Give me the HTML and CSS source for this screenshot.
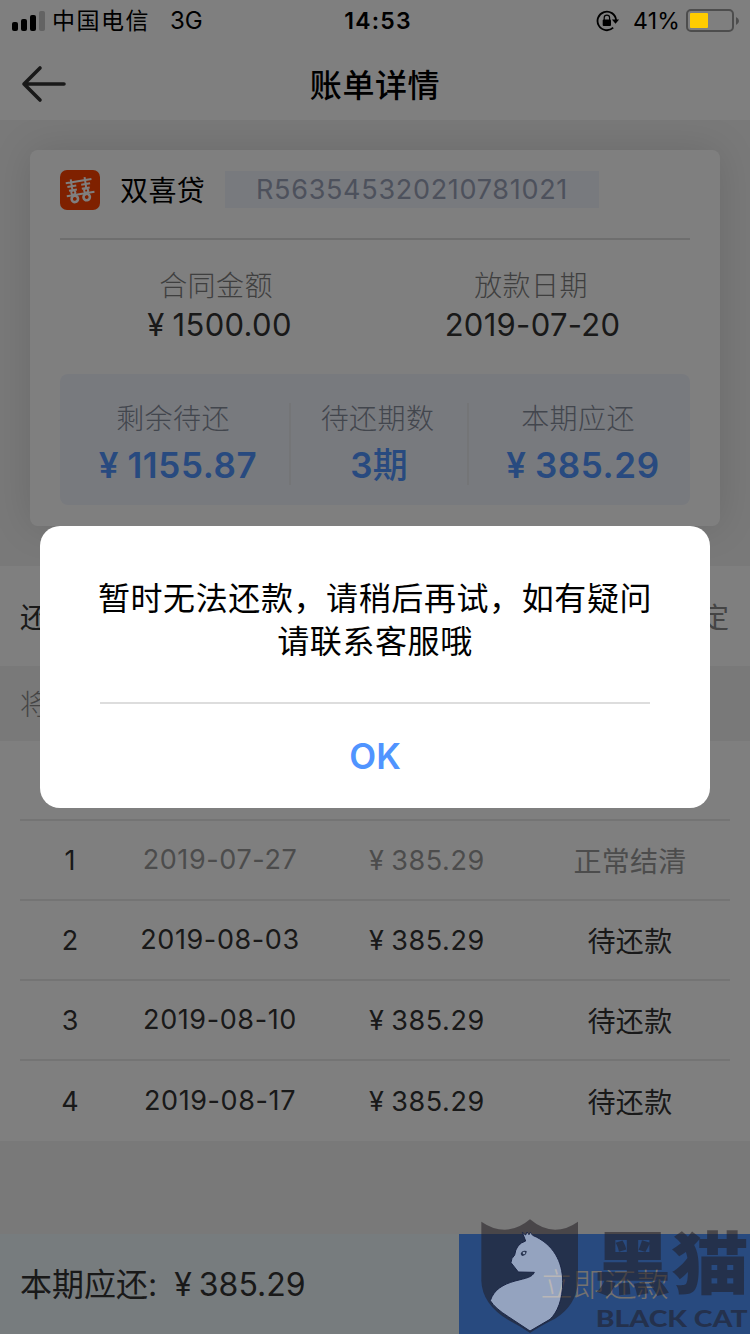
FILE: index.html
```html
<!DOCTYPE html>

<html lang="zh-CN">

<head>
    <meta charset="utf-8">
    <title> 账单详情 </title>
    <link rel="stylesheet" href="styles.css">
</head>

<body>
    <header id="status">
        <div class="carrier">
            <svg width="34" height="20" viewBox="0 0 34 20">
                <rect x="0" y="11" width="6" height="9" rx="2" />
                <rect x="9" y="8" width="6" height="12" rx="2" />
                <rect x="18" y="4" width="6" height="16" rx="2" />
                <rect x="27" y="0" width="6" height="20" rx="2" fill="#636363" />
            </svg>
            <span class="name">中国电信</span>
            <span class="network">3G</span>
        </div>
        <div class="time">14:53</div>
        <div class="power">
            <svg width="24" height="22" viewBox="0 0 24 22">
                <path d="M17.2 17.7A9.3 9.3 0 1 1 20.1 10" fill="none" stroke="#000" stroke-width="1.8" />
                <path d="M15.9 9.6h7.2l-3.6 4.2z" />
                <rect x="6.7" y="9.6" width="8.3" height="6.4" rx="1" />
                <path d="M8.2 10V7.8a2.7 2.7 0 0 1 5.4 0V10" fill="none" stroke="#000" stroke-width="1.2" />
            </svg>
            <span class="percent">41%</span>
            <svg width="54" height="24" viewBox="0 0 54 24">
                <rect x="1" y="1" width="46" height="21" rx="4" fill="none" stroke="#4d4d4d" stroke-width="2" />
                <rect x="4" y="4" width="18" height="15" rx="1" fill="#fc0" />
                <path d="M50 8q3 1.500 3 4t-3 4z" fill="#4d4d4d" />
            </svg>
        </div>
    </header>

    <nav id="nav">
        <svg width="46" height="38" viewBox="0 0 46 38">
            <path d="M19 3L3 19l16 16M3 19h40" fill="none" stroke="#333" stroke-width="3.6" stroke-linecap="round" stroke-linejoin="round" />
        </svg>
        <h1>账单详情</h1>
    </nav>

    <main>
        <section id="card">
            <div class="head">
                <svg width="40" height="40" viewBox="0 0 40 40">
                    <rect width="40" height="40" rx="7" fill="#ff4300" />
                    <g fill="none" stroke="#fff" stroke-width="2" transform="rotate(-9 20 20)">
                        <path d="M7 11h26M8 15h9M22 15h9M12.500 8v10M26.500 8v10M9 19h8M22 19h8M6 24h28" />
                        <circle cx="13" cy="21.500" r="2" />
                        <circle cx="26" cy="21.500" r="2" />
                        <circle cx="13.500" cy="28" r="3.200" stroke-width="2.600" />
                        <circle cx="25.500" cy="28" r="3.200" stroke-width="2.600" />
                    </g>
                </svg>
                <span class="product">双喜贷</span>
                <span class="number">R563545320210781021</span>
            </div>
            <div class="info">
                <div>
                    <p>合同金额</p>
                    <b class="amount">¥ 1500.00</b>
                </div>
                <div>
                    <p>放款日期</p>
                    <b>2019-07-20</b>
                </div>
            </div>
            <div class="summary">
                <div>
                    <p>剩余待还</p>
                    <b>¥ 1155.87</b>
                </div>
                <div>
                    <p>待还期数</p>
                    <b class="term">3<span>期</span></b>
                </div>
                <div>
                    <p>本期应还</p>
                    <b>¥ 385.29</b>
                </div>
            </div>
        </section>

        <section id="account">
            <span>还</span>
            <span class="bound">定</span>
        </section>
        <p id="tip">将</p>

        <section id="plan">
            <div class="row done">
                <span>1</span><span class="date">2019-07-27</span><span class="price">¥ 385.29</span><span class="state">正常结清</span>
            </div>
            <div class="row">
                <span>2</span><span class="date">2019-08-03</span><span class="price">¥ 385.29</span><span class="state">待还款</span>
            </div>
            <div class="row">
                <span>3</span><span class="date">2019-08-10</span><span class="price">¥ 385.29</span><span class="state">待还款</span>
            </div>
            <div class="row">
                <span>4</span><span class="date">2019-08-17</span><span class="price">¥ 385.29</span><span class="state">待还款</span>
            </div>
        </section>
    </main>

    <footer id="pay">
        <div class="total"><span>本期应还:</span><span class="sum">¥ 385.29</span></div>
        <div class="button">立即还款</div>
    </footer>

    <div id="mask">
        <div id="dialog">
            <p>暂时无法还款，请稍后再试，如有疑问<br>请联系客服哦</p>
            <div class="ok">OK</div>
        </div>
    </div>

    <svg id="watermark" width="310" height="134" viewBox="0 0 930 402">
        <path class="ink" fill-rule="evenodd" d="M124 65Q200 117 270 58Q340 117 414 65V242Q410 316 345 356Q300 378 270 399Q240 378 205 360Q126 312 124 242Z
            M247 97L257 105L261 96L267 104L271 97L278 106C340 132 368 185 368 245C368 300 352 337 330 358L270 393L205 350Q165 325 151 302C162 268 190 253 225 243C260 234 276 232 283 217L235 216L213 188Q213 175 224 165Q228 132 257 123Z" />
        <path class="cat" d="M247 97L257 105L261 96L267 104L271 97L278 106C340 132 368 185 368 245C368 300 352 337 330 358L270 393L205 350Q165 325 151 302C162 268 190 253 225 243C260 234 276 232 283 217L235 216L213 188Q213 175 224 165Q228 132 257 123Z" />
        <path class="eye" d="M242 162Q246 149 260 153Q260 167 246 168Z" />
        <circle cx="252" cy="159" r="4" fill="#95a4bf" />
        <text class="ink cn" x="461" y="294" textLength="466" lengthAdjust="spacingAndGlyphs" transform="matrix(1 0 0 .9 0 3)">黑猫</text>
        <text class="ink en" x="467" y="380" textLength="456" lengthAdjust="spacingAndGlyphs">BLACK CAT</text>
    </svg>
</body>

</html>
```
FILE: styles.css
```css
* {
    box-sizing: border-box;
}

body {
    margin: 0;
    width: 750px;
    height: 1334px;
    display: flex;
    flex-direction: column;
    overflow: hidden;
    background: #f2f2f2;
    color: #333;
    font: 28px Inter, "Noto Sans CJK SC", sans-serif;
    position: relative;
}

p,
h1 {
    margin: 0;
}

b {
    font-weight: 400;
}

svg {
    display: block;
    flex: none;
}

/* status bar stays above the mask */
#status {
    position: relative;
    z-index: 2;
    height: 40px;
    display: grid;
    grid-template-columns: 1fr auto 1fr;
    align-items: center;
    padding: 1px 10px 0 12px;
    color: #000;
    font-size: 23px;
    line-height: 40px;
}

#status .carrier,
#status .power {
    display: flex;
    align-items: center;
}

#status .power {
    justify-content: flex-end;
}

#status .name {
    margin: 0 20px 0 6px;
    letter-spacing: 1.5px;
}

#status .network {
    font-size: 24px;
}

#status .time {
    padding-left: 4px;
    font-weight: 600;
    letter-spacing: 1.2px;
}

#status .percent {
    margin: 0 6px 0 13px;
    letter-spacing: .2px;
}

#nav {
    height: 120px;
    margin-top: -40px;
    padding-top: 40px;
    background: #fff;
    display: grid;
    grid-template-columns: 68px 1fr 68px;
    align-items: center;
}

#nav svg {
    margin: 8px 0 0 21px;
}

#nav h1 {
    margin-top: 5px;
    text-align: center;
    color: #000;
    font-size: 32px;
    font-weight: 500;
    letter-spacing: .6px;
}

#card {
    height: 376px;
    margin: 30px 30px 40px;
    padding: 20px 30px;
    border-radius: 8px;
    background: #fff;
    box-shadow: 0 0 40px rgba(0, 0, 0, .12);
}

#card .head {
    display: flex;
    align-items: center;
    height: 70px;
    padding-bottom: 28px;
    border-bottom: 2px solid #ddd;
}

#card .product {
    width: 105px;
    margin: 0 0 2px 20px;
    flex: none;
    color: #000;
    letter-spacing: .4px;
}

#card .number {
    width: 374px;
    height: 37px;
    margin-bottom: 1px;
    line-height: 37px;
    text-align: center;
    background: #f1f4fd;
    color: #9ba3b8;
    font-size: 27px;
    letter-spacing: .7px;
}

#card .info {
    display: grid;
    grid-template-columns: 1fr 1fr;
    padding-top: 27px;
    text-align: center;
    color: #333;
}

#card p {
    font-size: 28px;
    line-height: 38px;
    letter-spacing: .4px;
    font-weight: 300;
    color: #7e7e7e;
}

#card .info p {
    padding-right: 3px;
}

#card .info b {
    display: block;
    font-size: 31px;
    line-height: 40px;
    letter-spacing: .3px;
}

#card .info .amount {
    padding-left: 4px;
    word-spacing: -1px;
}

#card .summary {
    display: grid;
    grid-template-columns: 231px 178px 221px;
    align-items: center;
    height: 131px;
    margin-top: 29px;
    border-radius: 8px;
    background: #f1f4fd;
    text-align: center;
}

#card .summary div {
    height: 82px;
    margin-top: 8px;
    border-right: 2px solid #e9ebee;
}

#card .summary div:last-child {
    border: none;
}

#card .summary p {
    padding-right: 3px;
    line-height: 33px;
    color: #858c9b;
}

#card .summary b {
    display: block;
    margin-top: 8px;
    padding-left: 7px;
    font-size: 35px;
    font-weight: 600;
    line-height: 43px;
    letter-spacing: .6px;
    word-spacing: -1px;
    color: #5094ff;
}

#card .summary .term {
    padding: 0;
    letter-spacing: 0;
}

#card .term span {
    font-weight: 500;
}

#account {
    display: flex;
    align-items: center;
    justify-content: space-between;
    height: 100px;
    padding: 0 21px 0 20px;
    background: #fff;
}

#account .bound {
    color: #888;
}

#tip {
    height: 75px;
    padding-left: 20px;
    line-height: 78px;
    font-weight: 300;
    color: #888;
}

#plan {
    height: 400px;
    padding: 78px 20px 0;
    background: #fff;
}

.row {
    display: grid;
    grid-template-columns: 100px 200px 214px 192px;
    align-items: center;
    height: 80px;
    border-top: 2px solid #e8e8e8;
    text-align: center;
    font-size: 27px;
}

.row:last-child {
    padding-top: 2px;
}

.row .date {
    margin-top: -2px;
    letter-spacing: .6px;
}

.row .price {
    letter-spacing: .6px;
    word-spacing: -1.5px;
}

.row .state {
    margin-top: -1px;
    font-size: 28px;
    letter-spacing: .3px;
}

.done .date,
.done .price,
.done .state {
    color: #999;
}

#pay {
    display: flex;
    height: 100px;
    margin-top: auto;
}

#pay .total {
    width: 459px;
    padding: 0 0 0 20px;
    background: #eff8fc;
    font-size: 32px;
    line-height: 101px;
}

#pay .sum {
    margin-left: 17px;
    word-spacing: -2px;
}

#pay .button {
    flex: 1;
    background: #5094ff;
    color: #eae4de;
    font-size: 32px;
    font-weight: 300;
    line-height: 101px;
    text-align: center;
}

#mask {
    position: absolute;
    inset: 0;
    display: flex;
    justify-content: center;
    align-items: center;
    background: rgba(0, 0, 0, .5);
}

#dialog {
    width: 670px;
    height: 282px;
    padding: 51px 55px 0;
    border-radius: 20px;
    background: #fff;
    color: #000;
    text-align: center;
}

#dialog p {
    font-size: 32px;
    line-height: 43px;
    letter-spacing: .6px;
    white-space: nowrap;
}

#dialog .ok {
    margin: 39px 5px 0;
    border-top: 2px solid #ddd;
    color: #5094ff;
    font-size: 35px;
    font-weight: 600;
    line-height: 105px;
}

#watermark {
    position: absolute;
    left: 440px;
    top: 1200px;
}

.ink {
    fill: rgba(33, 28, 34, .54);
}

.cat {
    fill: rgba(248, 246, 249, .52);
    stroke: #1b2544;
    stroke-width: 3;
}

.eye {
    fill: #263350;
}

.cn {
    font: 900 228px "Noto Sans CJK SC", sans-serif;
}

.en {
    font: 900 70px Lato, sans-serif;
}
```
